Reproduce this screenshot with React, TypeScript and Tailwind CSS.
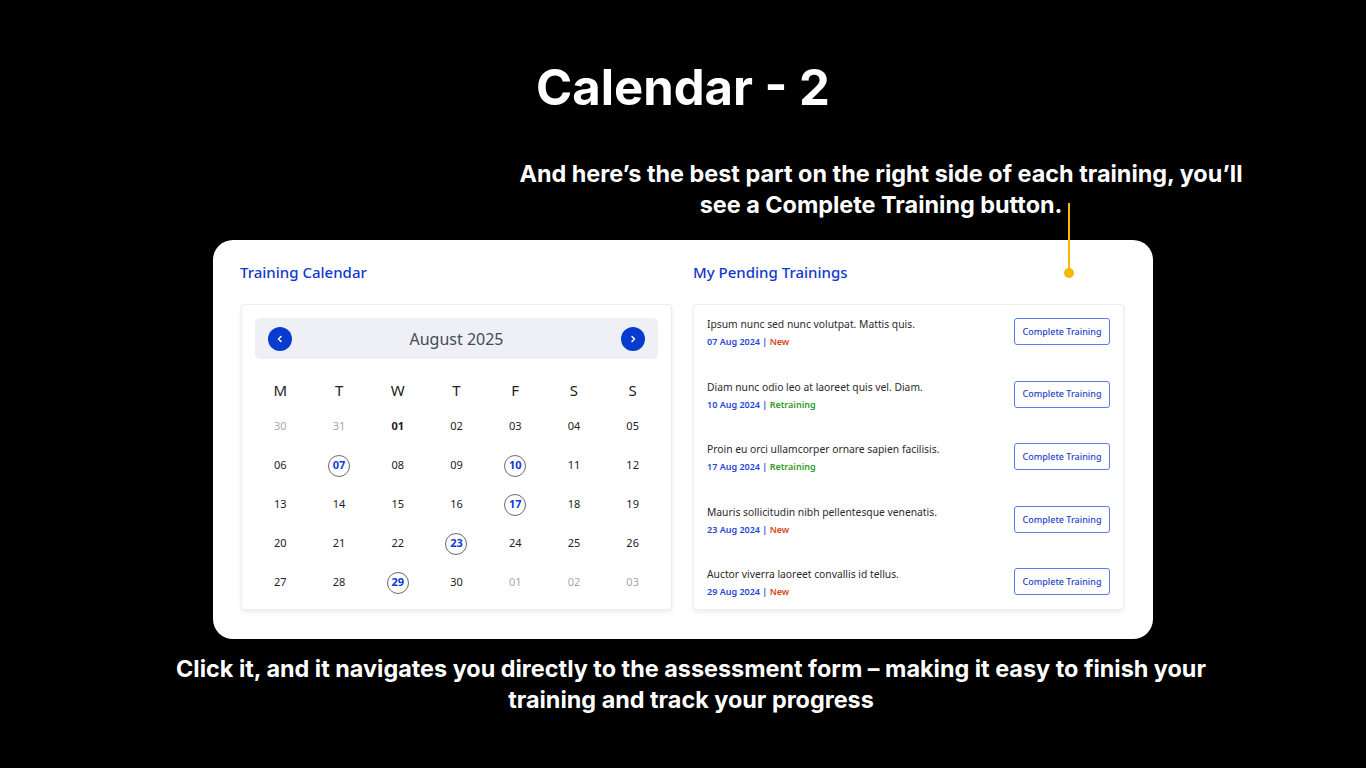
import React from "react";

type Cell = { d: string; muted?: boolean; bold?: boolean; mark?: boolean };

const WEEKDAYS = ["M", "T", "W", "T", "F", "S", "S"];

const WEEKS: Cell[][] = [
  [
    { d: "30", muted: true },
    { d: "31", muted: true },
    { d: "01", bold: true },
    { d: "02" },
    { d: "03" },
    { d: "04" },
    { d: "05" },
  ],
  [
    { d: "06" },
    { d: "07", mark: true },
    { d: "08" },
    { d: "09" },
    { d: "10", mark: true },
    { d: "11" },
    { d: "12" },
  ],
  [
    { d: "13" },
    { d: "14" },
    { d: "15" },
    { d: "16" },
    { d: "17", mark: true },
    { d: "18" },
    { d: "19" },
  ],
  [
    { d: "20" },
    { d: "21" },
    { d: "22" },
    { d: "23", mark: true },
    { d: "24" },
    { d: "25" },
    { d: "26" },
  ],
  [
    { d: "27" },
    { d: "28" },
    { d: "29", mark: true },
    { d: "30" },
    { d: "01", muted: true },
    { d: "02", muted: true },
    { d: "03", muted: true },
  ],
];

const TRAININGS = [
  { title: "Ipsum nunc sed nunc volutpat. Mattis quis.", date: "07 Aug 2024", status: "New" },
  { title: "Diam nunc odio leo at laoreet quis vel. Diam.", date: "10 Aug 2024", status: "Retraining" },
  { title: "Proin eu orci ullamcorper ornare sapien facilisis.", date: "17 Aug 2024", status: "Retraining" },
  { title: "Mauris sollicitudin nibh pellentesque venenatis.", date: "23 Aug 2024", status: "New" },
  { title: "Auctor viverra laoreet convallis id tellus.", date: "29 Aug 2024", status: "New" },
];

const headFont = { fontFamily: "Inter, Lato, sans-serif" };

function Chevron({ dir }: { dir: "left" | "right" }) {
  return (
    <svg width="8" height="8" viewBox="0 0 8 8" fill="none">
      <path
        d={dir === "left" ? "M5 1.5 L2.5 4 L5 6.5" : "M3 1.5 L5.5 4 L3 6.5"}
        stroke="white"
        strokeWidth="1.5"
        strokeLinecap="round"
        strokeLinejoin="round"
      />
    </svg>
  );
}

function CalendarPanel() {
  return (
    <div className="h-[306px] rounded-[3px] border border-[#eceef2] bg-white shadow-[0_2px_4px_rgba(0,0,0,0.08)] px-[13px] pt-[13px]">
      <div className="flex h-[41px] items-center justify-between rounded-[5px] bg-[#eef0f5] px-[13px]">
        <button className="flex h-[24px] w-[24px] items-center justify-center rounded-full bg-[#0a3bcf]">
          <Chevron dir="left" />
        </button>
        <span className="text-[16px] text-[#454a55]">August 2025</span>
        <button className="flex h-[24px] w-[24px] items-center justify-center rounded-full bg-[#0a3bcf]">
          <Chevron dir="right" />
        </button>
      </div>
      <div className="-mx-[4px] mt-[14px] grid grid-cols-7">
        {WEEKDAYS.map((w, i) => (
          <div key={i} className="flex h-[34px] items-center justify-center text-[15px] text-[#222]">
            {w}
          </div>
        ))}
        {WEEKS.flat().map((c, i) => (
          <div key={i} className="flex h-[39px] items-center justify-center">
            {c.mark ? (
              <span className="flex h-[22px] w-[22px] items-center justify-center rounded-full border border-[#6b6b6b] text-[11px] font-bold text-[#0f3bd6]">
                {c.d}
              </span>
            ) : (
              <span
                className={
                  "text-[11px] " +
                  (c.muted ? "text-[#a8a8a8]" : c.bold ? "font-bold text-[#1a1a1a]" : "text-[#222]")
                }
              >
                {c.d}
              </span>
            )}
          </div>
        ))}
      </div>
    </div>
  );
}

function PendingPanel() {
  return (
    <div className="h-[306px] rounded-[3px] border border-[#eceef2] bg-white shadow-[0_2px_4px_rgba(0,0,0,0.08)] pl-[13px] pr-[13px] pt-[13px]">
      {TRAININGS.map((t) => (
        <div key={t.date} className="flex h-[62.6px] items-start justify-between">
          <div className="-mt-[1px]">
            <div className="text-[10.3px] leading-[14px] text-[#2b2b2b]">{t.title}</div>
            <div className="mt-[5px] text-[9px] font-semibold leading-[12px]">
              <span className="text-[#2447d4]">{t.date}</span>
              <span className="text-[#2447d4]"> | </span>
              <span className={t.status === "New" ? "text-[#d6471a]" : "text-[#2f9a1e]"}>{t.status}</span>
            </div>
          </div>
          <button className="h-[27px] w-[96px] rounded-[3px] border border-[#5c7be6] bg-white text-[9px] font-medium text-[#2544c9]">
            Complete Training
          </button>
        </div>
      ))}
    </div>
  );
}

export default function App() {
  return (
    <div className="relative h-[768px] w-full overflow-hidden bg-black" style={{ fontFamily: "'Noto Sans', 'Open Sans', sans-serif" }}>
      <h1
        className="pt-[58px] text-center text-[49px] font-bold leading-[60px] text-white"
        style={headFont}
      >
        Calendar - 2
      </h1>

      <p
        className="ml-[431px] mt-[40px] w-[900px] text-center text-[23.4px] font-bold leading-[31px] text-white"
        style={headFont}
      >
        And here’s the best part on the right side of each training, you’ll
        <br />
        see a Complete Training button.
      </p>

      <div className="ml-[213px] mt-[20px] h-[399px] w-[940px] rounded-[20px] bg-white pl-[28px] pr-[29px] pt-[22px]">
        <div className="grid grid-cols-2 gap-[21px]">
          <div>
            <h2 className="-ml-[1px] h-[20px] text-[15px] font-medium leading-[20px] text-[#1138cf]">Training Calendar</h2>
            <div className="mt-[22px]">
              <CalendarPanel />
            </div>
          </div>
          <div>
            <h2 className="h-[20px] text-[15px] font-medium leading-[20px] text-[#1138cf]">My Pending Trainings</h2>
            <div className="mt-[22px]">
              <PendingPanel />
            </div>
          </div>
        </div>
      </div>

      <p
        className="mt-[14px] pl-[16px] text-center text-[23.4px] font-bold leading-[31px] text-white"
        style={headFont}
      >
        Click it, and it navigates you directly to the assessment form – making it easy to finish your
        <br />
        training and track your progress
      </p>

      {/* annotation pointer */}
      <div className="absolute left-[1068px] top-[203px] h-[70px] w-[2px] bg-[#f6b900]" />
      <div className="absolute left-[1064px] top-[268px] h-[10px] w-[10px] rounded-full bg-[#f6b900]" />
    </div>
  );
}
